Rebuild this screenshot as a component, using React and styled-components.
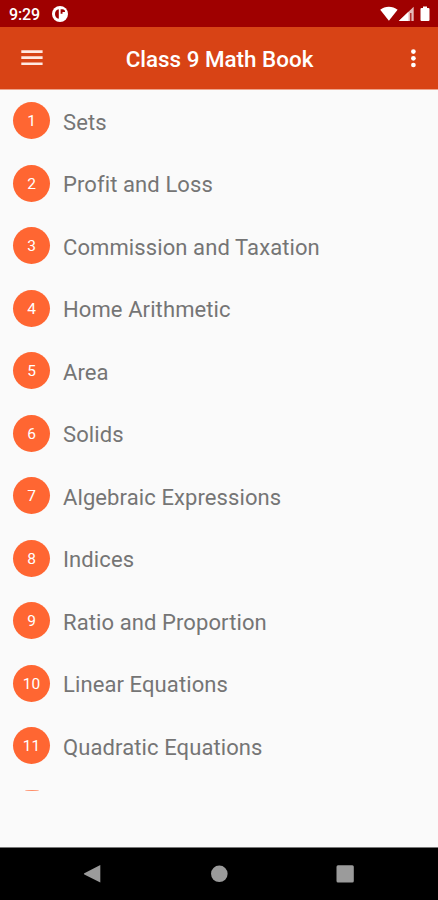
import React from "react";
import styled, { createGlobalStyle } from "styled-components";

const GlobalStyle = createGlobalStyle`
  * { box-sizing: border-box; }
  html, body { margin: 0; padding: 0; background: #fafafa; }
  body { font-family: Roboto, "Liberation Sans", sans-serif; overflow: hidden; }
`;

const Screen = styled.div`
  width: 438px;
  height: 900px;
  display: flex;
  flex-direction: column;
  background: #fafafa;
  overflow: hidden;
`;

const StatusBar = styled.header`
  flex: none;
  height: 27px;
  padding: 1px 8px 0 9px;
  display: flex;
  align-items: center;
  justify-content: space-between;
  background: #9f0000;
  color: #fff;
`;

const StatusGroup = styled.div`
  display: flex;
  align-items: center;
  gap: ${(p) => p.$gap}px;
`;

const Clock = styled.span`
  padding-top: 1px;
  font-size: 16px;
  line-height: 21px;
  font-weight: 500;
  letter-spacing: -0.1px;
`;

const Glyph = styled.svg`
  display: block;
  flex: none;
`;

const AppBar = styled.div`
  flex: none;
  height: 63px;
  padding: 0 17px 0 20px;
  display: grid;
  grid-template-columns: 24px 1fr 16px;
  align-items: center;
  background: #d84315;
  border-bottom: 1px solid #eda48d;
  color: #fff;
`;

const IconButton = styled.button`
  padding: 0;
  border: 0;
  background: none;
  color: inherit;
  display: flex;
  justify-content: center;
`;

const Title = styled.h1`
  margin: 2px 0 0;
  padding-right: 10px;
  text-align: center;
  font-size: 22.4px;
  line-height: 28px;
  font-weight: 500;
  letter-spacing: 0;
  white-space: nowrap;
`;

const ChapterList = styled.ol`
  flex: none;
  height: 701px;
  margin: 0;
  padding: 0;
  list-style: none;
  overflow: hidden;
`;

const Chapter = styled.li`
  height: 62.5px;
  padding: 12.2px 0 0 13px;
  display: flex;
  align-items: flex-start;
  gap: 13px;
`;

const Badge = styled.span`
  flex: none;
  width: 37px;
  height: 37px;
  border-radius: 50%;
  background: #ff6632;
  color: #fff;
  font-size: 15.5px;
  line-height: 39px;
  text-align: center;
`;

const ChapterName = styled.span`
  padding-top: 6.4px;
  font-size: 22px;
  line-height: 28px;
  letter-spacing: 0.1px;
  color: #757575;
  white-space: nowrap;
`;

const NextChapterEdge = styled.li`
  width: 14px;
  height: 2px;
  margin: 12px 0 0 24.5px;
  border-radius: 50% 50% 0 0;
  background: #ff8c66;
`;

const NavBar = styled.nav`
  flex: none;
  height: 53px;
  margin-top: auto;
  padding: 0 84px 0 83px;
  display: flex;
  align-items: center;
  justify-content: space-between;
  background: #000;
  border-top: 1px solid #777;
  color: #9b9b9b;
`;

const chapters = [
  "Sets",
  "Profit and Loss",
  "Commission and Taxation",
  "Home Arithmetic",
  "Area",
  "Solids",
  "Algebraic Expressions",
  "Indices",
  "Ratio and Proportion",
  "Linear Equations",
  "Quadratic Equations",
];

export default function App() {
  return (
    <>
      <GlobalStyle />
      <Screen>
        <StatusBar>
          <StatusGroup $gap={11.5}>
            <Clock>9:29</Clock>
            <Glyph width="16" height="16" viewBox="0 0 16 16">
              <circle cx="8" cy="8" r="8" fill="#fff" />
              <path d="M6.800 3.300v9.400C4.500 12.300 3 10.500 3 8s1.500-4.300 3.800-4.700zM8.600 3.200h1.800c1.700 0 2.700 1.100 2.700 2.700h-2.600v1.900H8.600z" fill="#9f0000" />
            </Glyph>
          </StatusGroup>
          <Glyph width="50" height="16" viewBox="0 0 50 16" fill="#fff">
            <path d="M0.2 3.7C5-0.2 12.6-0.2 17.6 3.7L8.9 14.7z" />
            <path d="M33.7 0.8V15H18.8z" opacity="0.72" />
            <path d="M28.5 5.8V15H18.8z" />
            <path d="M30 7h1.5v8H30z" fill="#9f0000" opacity="0.75" />
            <path d="M43 .5h4V2h1.4q1.1 0 1.1 1.1v10.8q0 1.1-1.1 1.1h-6.8q-1.1 0-1.1-1.1V3.1Q40.500 2 41.600 2H43z" />
          </Glyph>
        </StatusBar>
        <AppBar>
          <IconButton aria-label="Menu">
            <Glyph width="22" height="16" viewBox="0 0 22 16" fill="#ffe9e2">
              <path d="M0.300 0.200h21.300v2.700h-21.300zM0.300 6.300h21.300v2.700h-21.300zM0.300 12.400h21.300v2.700h-21.300z" />
            </Glyph>
          </IconButton>
          <Title>Class 9 Math Book</Title>
          <IconButton aria-label="More options">
            <Glyph width="6" height="20" viewBox="0 0 6 20" fill="#fff">
              <circle cx="3.400" cy="3.600" r="2.350" />
              <circle cx="3.400" cy="10.300" r="2.350" />
              <circle cx="3.400" cy="17" r="2.350" />
            </Glyph>
          </IconButton>
        </AppBar>
        <ChapterList>
          {chapters.map((name, i) => (
            <Chapter key={name}>
              <Badge>{i + 1}</Badge>
              <ChapterName>{name}</ChapterName>
            </Chapter>
          ))}
          <NextChapterEdge aria-hidden="true" />
        </ChapterList>
        <NavBar>
          <Glyph width="18" height="20" viewBox="0 0 18 20" fill="currentColor">
            <path d="M17.300 1v17.500L1.300 10.500Q0.400 9.800 1.300 9.200z" />
          </Glyph>
          <Glyph width="18" height="18" viewBox="0 0 18 18" fill="currentColor">
            <circle cx="9.300" cy="8.800" r="8.300" />
          </Glyph>
          <Glyph width="18" height="18" viewBox="0 0 18 18" fill="currentColor">
            <rect x="0.500" y="0.300" width="17.300" height="17.300" rx="1.500" />
          </Glyph>
        </NavBar>
      </Screen>
    </>
  );
}
